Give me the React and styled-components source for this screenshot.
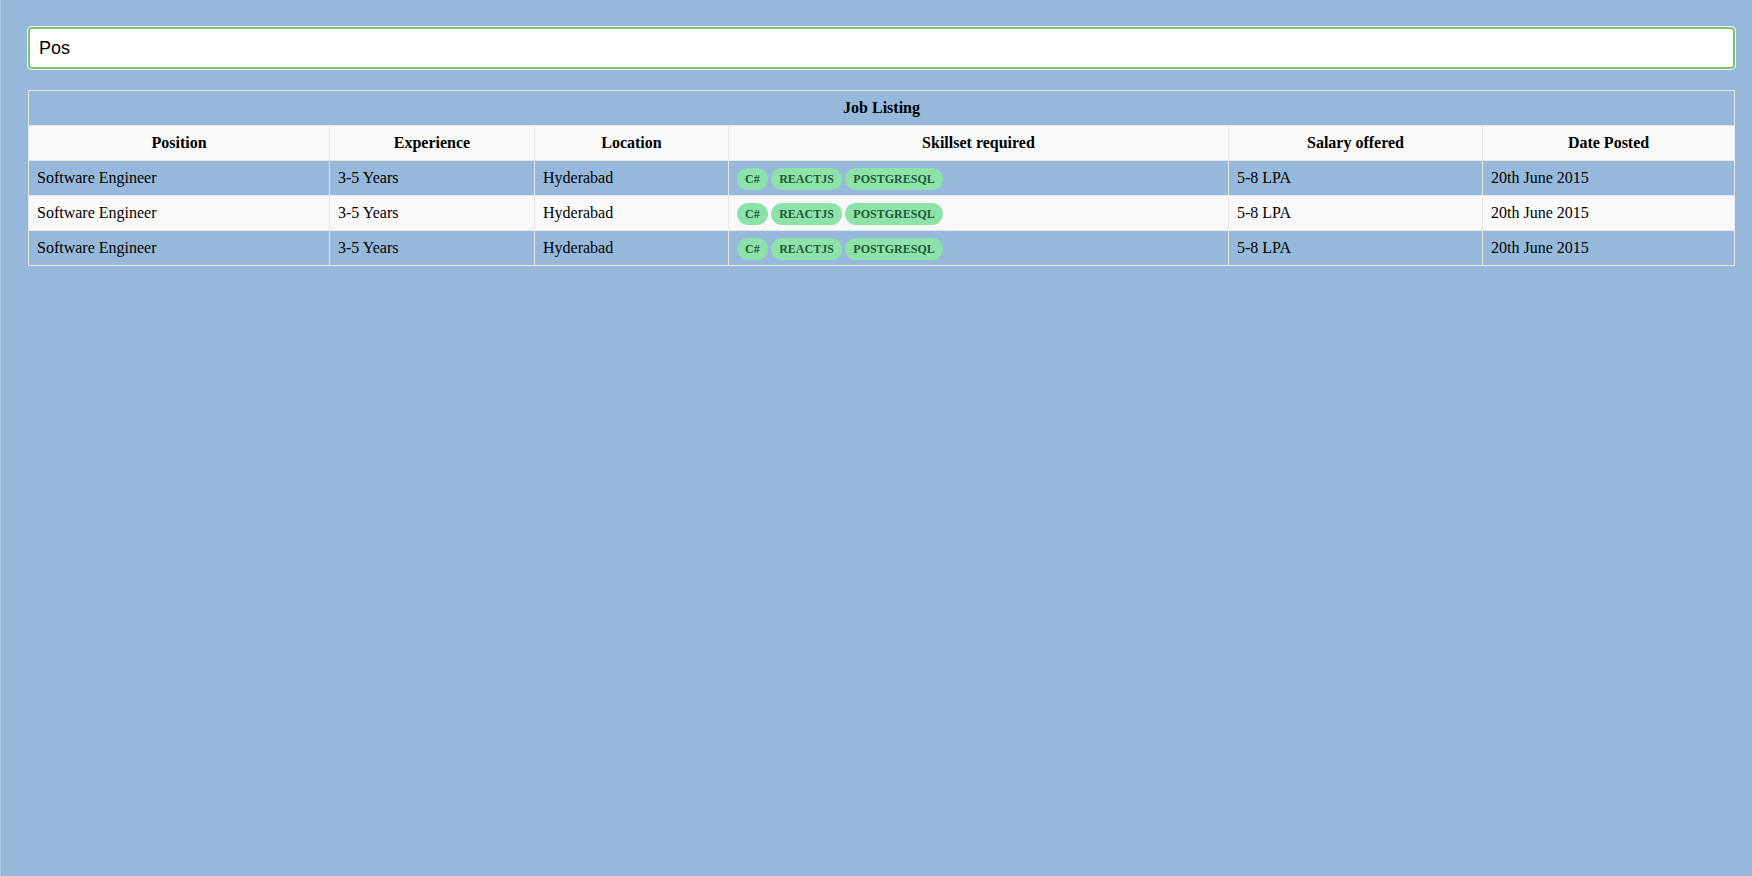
import React, { useEffect, useRef } from "react";
import styled, { createGlobalStyle } from "styled-components";

const GlobalStyle = createGlobalStyle`
  html, body {
    margin: 0;
    padding: 0;
    background: #95b8db;
  }
  body {
    min-height: 876px;
    border-left: 1px solid #a9c6e2;
    box-sizing: border-box;
    font-family: "Liberation Serif", "Times New Roman", serif;
    color: #000;
  }
`;

const Page = styled.div`
  padding: 27px 17px 0 27px;
  display: flex;
  flex-direction: column;
  gap: 21px;
`;

const SearchInput = styled.input`
  box-sizing: border-box;
  width: 100%;
  height: 42px;
  border: 2px solid #7ec36f;
  border-radius: 4px;
  box-shadow: 0 0 0 1px #ffffff;
  background: #ffffff;
  padding: 0 9px;
  font-family: "Liberation Sans", Arial, sans-serif;
  font-size: 18px;
  color: #000;
  outline: none;
  caret-color: #000;
`;

const Table = styled.table`
  width: calc(100% - 1px);
  border-collapse: collapse;
  table-layout: fixed;
  border: 1px solid #e6e6e6;
  font-size: 16px;
`;

const TitleCell = styled.th`
  padding: 8px;
  font-weight: bold;
  text-align: center;
  border: 1px solid #e6e6e6;
`;

const Row = styled.tr`
  background: ${(p) => (p.$light ? "#f9f9f9" : "transparent")};
`;

const HeadCell = styled.th`
  padding: 8px;
  font-weight: bold;
  text-align: center;
  border: 1px solid #e6e6e6;
`;

const Cell = styled.td`
  padding: 8px;
  text-align: left;
  border: 1px solid #e6e6e6;
  white-space: nowrap;
`;

const Chip = styled.span`
  display: inline;
  background: #8de2a9;
  color: #1f5a36;
  font-weight: bold;
  font-size: 12px;
  padding: 4px 8px;
  border-radius: 12px;
  margin-right: 3.5px;
`;

const columns = [
  { label: "Position", width: 301 },
  { label: "Experience", width: 205 },
  { label: "Location", width: 194 },
  { label: "Skillset required", width: 500 },
  { label: "Salary offered", width: 254 },
  { label: "Date Posted", width: 252 },
];

const jobs = [
  {
    position: "Software Engineer",
    experience: "3-5 Years",
    location: "Hyderabad",
    skills: ["C#", "REACTJS", "POSTGRESQL"],
    salary: "5-8 LPA",
    date: "20th June 2015",
  },
  {
    position: "Software Engineer",
    experience: "3-5 Years",
    location: "Hyderabad",
    skills: ["C#", "REACTJS", "POSTGRESQL"],
    salary: "5-8 LPA",
    date: "20th June 2015",
  },
  {
    position: "Software Engineer",
    experience: "3-5 Years",
    location: "Hyderabad",
    skills: ["C#", "REACTJS", "POSTGRESQL"],
    salary: "5-8 LPA",
    date: "20th June 2015",
  },
];

export default function App() {
  const ref = useRef(null);
  useEffect(() => {
    if (ref.current) {
      ref.current.focus();
      ref.current.setSelectionRange(3, 3);
    }
  }, []);
  return (
    <>
      <GlobalStyle />
      <Page>
        <SearchInput ref={ref} defaultValue="Pos" />
        <Table>
          <colgroup>
            {columns.map((c) => (
              <col key={c.label} style={{ width: c.width }} />
            ))}
          </colgroup>
          <thead>
            <tr>
              <TitleCell colSpan={6}>Job Listing</TitleCell>
            </tr>
            <Row $light>
              {columns.map((c) => (
                <HeadCell key={c.label}>{c.label}</HeadCell>
              ))}
            </Row>
          </thead>
          <tbody>
            {jobs.map((j, i) => (
              <Row key={i} $light={i % 2 === 1}>
                <Cell>{j.position}</Cell>
                <Cell>{j.experience}</Cell>
                <Cell>{j.location}</Cell>
                <Cell>
                  {j.skills.map((s) => (
                    <Chip key={s}>{s}</Chip>
                  ))}
                </Cell>
                <Cell>{j.salary}</Cell>
                <Cell>{j.date}</Cell>
              </Row>
            ))}
          </tbody>
        </Table>
      </Page>
    </>
  );
}
